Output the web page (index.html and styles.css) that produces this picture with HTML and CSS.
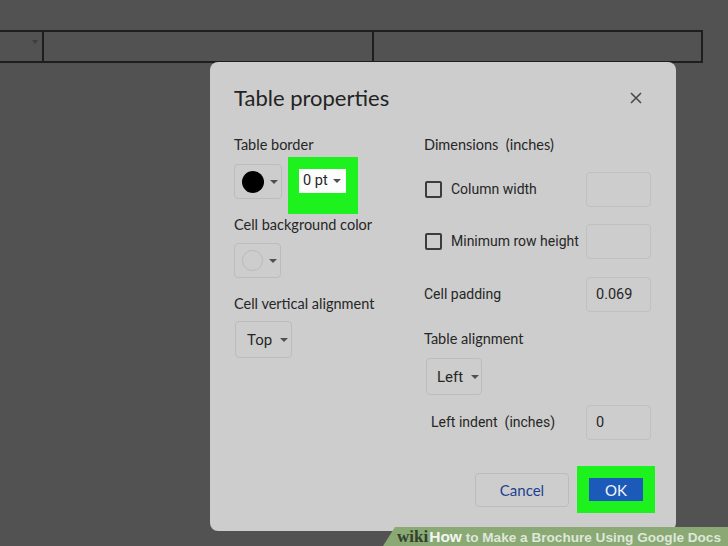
FILE: index.html
```html
<!DOCTYPE html>
<html>
<head>
<meta charset="utf-8">
<link rel="stylesheet" href="styles.css">
</head>
<body>
<div class="page">
  <div class="sheet-table">
    <div class="cell cell-first"><span class="cell-caret"></span></div>
    <div class="cell cell-mid"></div>
    <div class="cell cell-last"></div>
  </div>

  <div class="dialog">
    <div class="dialog-head">
      <div class="dialog-title">Table properties</div>
      <svg class="close" width="14" height="14" viewBox="0 0 14 14"><path d="M2 2L12 12M12 2L2 12" stroke="#4a4a4a" stroke-width="1.6" fill="none"/></svg>
    </div>
    <div class="dialog-body">
      <div class="col col-left">
        <div class="label label-first">Table border</div>
        <div class="border-row">
          <div class="color-btn"><span class="swatch swatch-black"></span><span class="caret"></span></div>
          <div class="highlight hl-pt">
            <div class="pt-box">0 pt <span class="caret"></span></div>
          </div>
        </div>
        <div class="label label-bg">Cell background color</div>
        <div class="color-btn color-btn-bg"><span class="swatch swatch-empty"></span><span class="caret"></span></div>
        <div class="label label-valign">Cell vertical alignment</div>
        <div class="dropdown dd-top">Top <span class="caret"></span></div>
      </div>
      <div class="col col-right">
        <div class="label label-first">Dimensions&nbsp; (inches)</div>
        <div class="field-row fr-1">
          <span class="checkbox"></span><span class="field-label">Column width</span>
          <span class="input"></span>
        </div>
        <div class="field-row fr-2">
          <span class="checkbox"></span><span class="field-label">Minimum row height</span>
          <span class="input"></span>
        </div>
        <div class="field-row fr-3">
          <span class="field-label">Cell padding</span>
          <span class="input">0.069</span>
        </div>
        <div class="label label-align">Table alignment</div>
        <div class="dropdown dd-left">Left <span class="caret"></span></div>
        <div class="field-row fr-4">
          <span class="field-label indent">Left indent&nbsp; (inches)</span>
          <span class="input">0</span>
        </div>
      </div>
    </div>
    <div class="dialog-foot">
      <div class="btn-cancel">Cancel</div>
      <div class="highlight hl-ok"><div class="btn-ok">OK</div></div>
    </div>
  </div>

  <div class="watermark"><span class="wm-wiki">wiki</span><span class="wm-how">How</span><span class="wm-rest"> to Make a Brochure Using Google Docs</span></div>
</div>
</body>
</html>
```

FILE: styles.css
```css
* { box-sizing: border-box; }
html, body { margin: 0; padding: 0; }
body {
  width: 728px;
  height: 546px;
  overflow: hidden;
  background: #525252;
  font-family: Roboto, "Liberation Sans", sans-serif;
  color: #262626;
}
.page {
  position: relative;
  width: 728px;
  height: 546px;
  padding-top: 30px;
}
.sheet-table {
  display: grid;
  grid-template-columns: 44px 330px 329px;
  height: 33px;
  border-top: 2px solid #1e1e1e;
  border-bottom: 2px solid #1e1e1e;
  width: 703px;
}
.cell { border-right: 2px solid #1e1e1e; position: relative; }
.cell-caret {
  position: absolute;
  left: 32px; top: 8px;
  width: 0; height: 0;
  border-left: 3px solid transparent;
  border-right: 3px solid transparent;
  border-top: 4px solid #3e3e3e;
}

.dialog {
  position: absolute;
  left: 210px;
  top: 62px;
  width: 466px;
  height: 469px;
  background: #cdcdcd;
  border-radius: 8px;
  padding: 22px 25px 0 24px;
}
.dialog-head {
  display: flex;
  justify-content: space-between;
  align-items: center;
  height: 28px;
}
.dialog-title {
  font-family: Lato, "Open Sans", sans-serif;
  font-size: 22px;
  color: #232323;
  line-height: 28px;
}
.close { margin-right: 8px; margin-top: 0px; }

.dialog-body {
  display: grid;
  grid-template-columns: 190px 227px;
  margin-top: 23px;
}
.col { display: flex; flex-direction: column; align-items: flex-start; }
.label {
  font-family: Lato, "Open Sans", sans-serif;
  font-size: 14.5px;
  line-height: 20px;
  height: 20px;
  color: #262626;
}
.border-row { display: flex; align-items: flex-start; margin-top: 2px; }
.color-btn {
  width: 48px;
  height: 35px;
  border: 1px solid #bcbcbc;
  border-radius: 4px;
  display: flex;
  align-items: center;
  padding-left: 7px;
  gap: 6px;
  margin-top: 7px;
}
.swatch { width: 22px; height: 22px; border-radius: 50%; display: block; }
.swatch-black { background: #000; }
.swatch-empty { border: 1px solid #b9b9b9; width: 21px; height: 21px; }
.caret {
  display: inline-block;
  width: 0; height: 0;
  border-left: 4px solid transparent;
  border-right: 4px solid transparent;
  border-top: 4px solid #505050;
  vertical-align: middle;
}
.highlight { background: #1ef21e; }
.hl-pt {
  width: 70px;
  height: 57px;
  margin-left: 6px;
  padding: 12px 0 0 11px;
}
.pt-box {
  width: 47px;
  height: 24px;
  background: #fdfdfd;
  font-size: 14.5px;
  line-height: 24px;
  padding-left: 4px;
  display: flex;
  align-items: center;
  gap: 5px;
}
.label-bg { margin-top: 1px; }
.color-btn-bg { margin-top: 8px; width: 47px; }
.label-valign { margin-top: 16px; }
.dropdown {
  height: 37px;
  border: 1px solid #bcbcbc;
  border-radius: 4px;
  display: flex;
  align-items: center;
  gap: 8px;
  font-size: 15px;
  padding-left: 11px;
}
.dd-top { margin-top: 7px; margin-left: 1px; width: 57px; }

.field-row {
  display: flex;
  align-items: center;
  width: 227px;
  height: 35px;
}
.fr-1 { margin-top: 17px; }
.fr-2 { margin-top: 17px; }
.fr-3 { margin-top: 18px; }
.fr-4 { margin-top: 10px; }
.checkbox {
  width: 17px;
  height: 17px;
  border: 2px solid #3c3c3c;
  border-radius: 2px;
  margin-left: 1px;
  margin-right: 9px;
}
.field-label { font-size: 14px; color: #262626; flex: 1; white-space: nowrap; line-height: 18px; margin-top: -2px; }
.indent { padding-left: 7px; }
.input {
  width: 65px;
  height: 35px;
  border: 1px solid #c0c0c0;
  border-radius: 4px;
  font-size: 14.5px;
  line-height: 33px;
  padding-left: 9px;
  color: #262626;
}
.label-align { margin-top: 17px; }
.dd-left { margin-top: 9px; margin-left: 2px; width: 56px; padding-left: 10px; }

.dialog-foot {
  display: flex;
  justify-content: flex-end;
  align-items: center;
  gap: 8px;
  margin-top: 26px;
  margin-right: -4px;
}
.btn-cancel {
  width: 94px;
  height: 34px;
  border: 1px solid #bcbcbc;
  border-radius: 4px;
  display: flex;
  align-items: center;
  justify-content: center;
  font-family: Lato, "Open Sans", sans-serif;
  font-size: 15px;
  color: #1d4190;
}
.hl-ok {
  width: 78px;
  height: 47px;
  display: flex;
  align-items: center;
  justify-content: center;
}
.btn-ok {
  width: 54px;
  height: 23px;
  background: #1b5ab8;
  color: #f4f6fb;
  font-family: Lato, "Open Sans", sans-serif;
  font-size: 15px;
  display: flex;
  align-items: center;
  justify-content: center;
}

.watermark {
  position: absolute;
  left: 383px;
  top: 527px;
  width: 345px;
  height: 19px;
  background: #8aa975;
  clip-path: polygon(12px 0, 100% 0, 100% 100%, 0 100%);
  padding-left: 14px;
  font-family: "Liberation Sans", Arial, sans-serif;
  font-weight: bold;
  line-height: 20px;
  white-space: nowrap;
}
.wm-wiki { font-family: "Liberation Serif", serif; color: #33402a; font-size: 17px; }
.wm-how { color: #f3f6f0; font-size: 15.5px; margin-left: 1px; }
.wm-rest { color: #dfe7d9; font-size: 13.6px; }
```
